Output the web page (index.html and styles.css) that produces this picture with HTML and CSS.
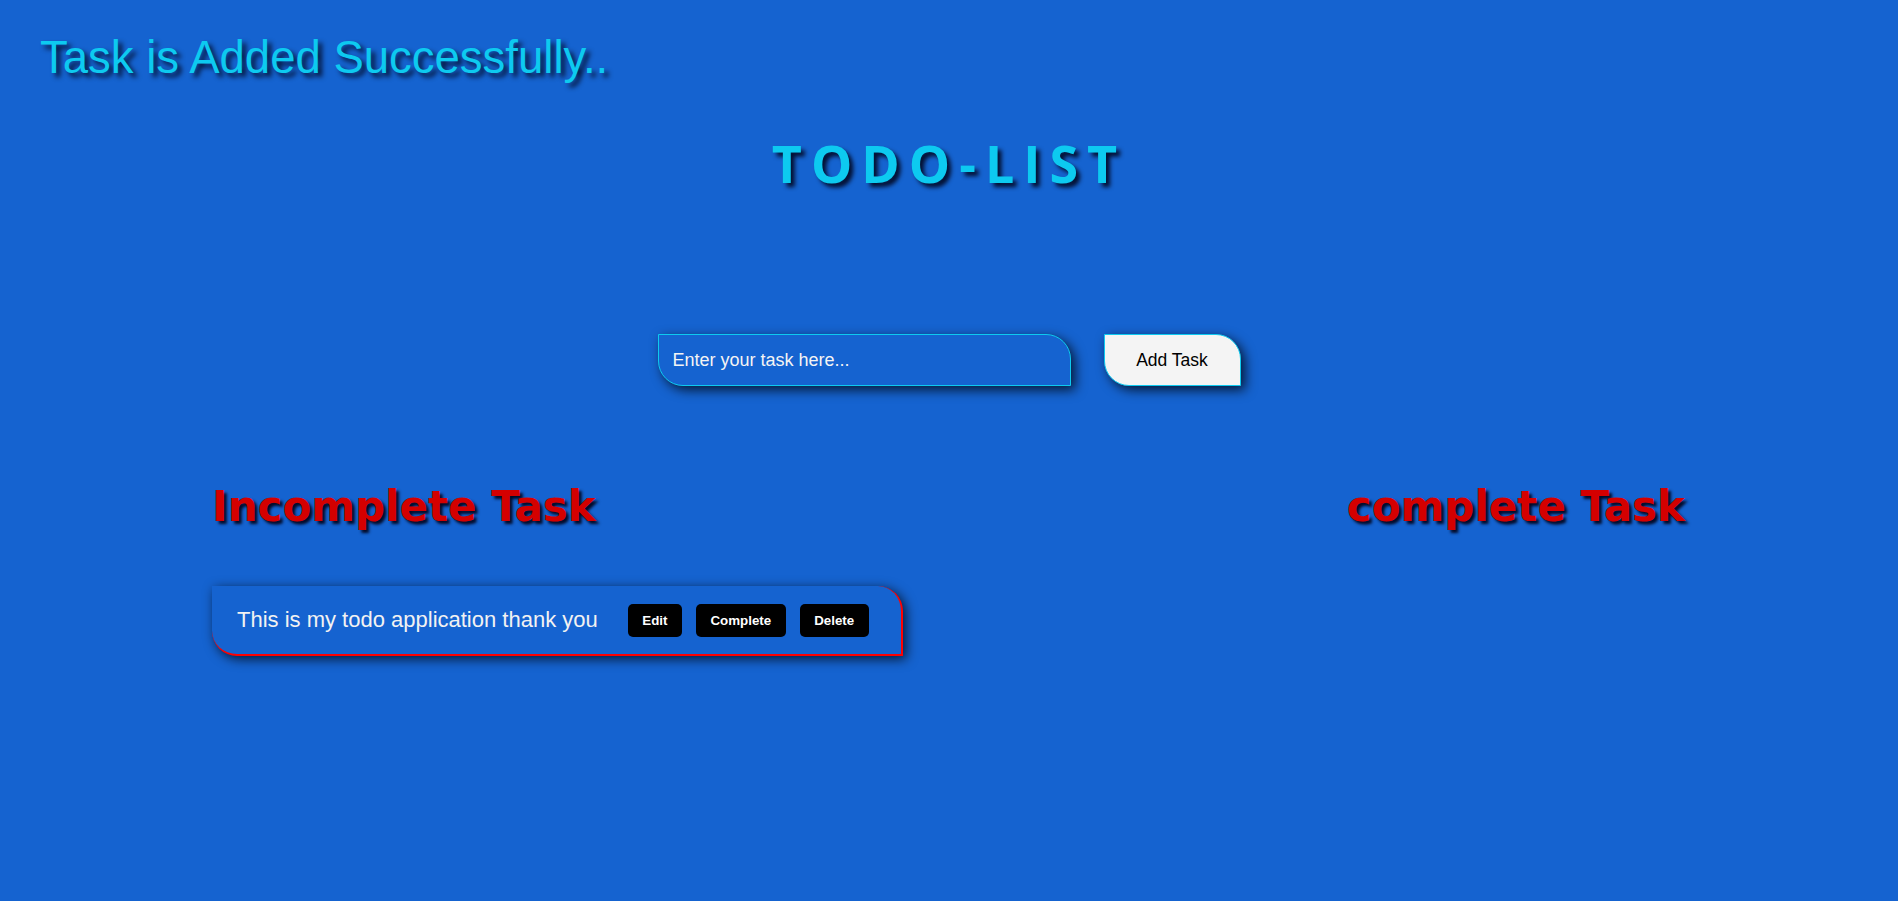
FILE: index.html
```html
<!DOCTYPE html>
<html lang="en">
<head>
<meta charset="utf-8">
<title>TODO-LIST</title>
<link rel="stylesheet" href="styles.css">
</head>
<body>
  <p class="msg">Task is Added Successfully..</p>
  <h1 class="title">TODO-LIST</h1>
  <div class="form">
    <input class="task-input" type="text" placeholder="Enter your task here...">
    <button class="add-btn">Add Task</button>
  </div>
  <div class="lists">
    <section class="col">
      <h2 class="heading">Incomplete Task</h2>
      <div class="item">
        <span class="item-text">This is my todo application thank you</span>
        <div class="actions">
          <button class="act">Edit</button>
          <button class="act">Complete</button>
          <button class="act">Delete</button>
        </div>
      </div>
    </section>
    <section class="col">
      <h2 class="heading">complete Task</h2>
    </section>
  </div>
</body>
</html>
```
FILE: styles.css
```css
html, body {
  margin: 0;
  padding: 0;
}
body {
  background: #1563d0;
  font-family: "Liberation Sans", Arial, sans-serif;
  min-height: 901px;
}
.msg {
  margin: 0;
  padding: 32px 0 0 40px;
  font-size: 45.5px;
  color: #0dcaf0;
  text-shadow: 4px 4px 5px rgba(0, 0, 20, 0.85);
}
.title {
  margin: 43px 0 0;
  text-align: center;
  font-family: "Open Sans", sans-serif;
  font-weight: 700;
  font-size: 52px;
  letter-spacing: 9px;
  color: #0dcaf0;
  text-shadow: 4px 4px 4px rgba(0, 0, 20, 0.85);
}
.form {
  margin-top: 136px;
  display: flex;
  justify-content: center;
  gap: 33px;
}
.task-input {
  box-sizing: border-box;
  width: 413px;
  height: 52px;
  padding: 0 14px;
  border: 1px solid #0dcaf0;
  border-radius: 0 25px 0 25px;
  background: #1563d0;
  color: #fff;
  font-family: "Liberation Sans", Arial, sans-serif;
  font-size: 18px;
  box-shadow: 4px 4px 12px rgba(0, 0, 0, 0.75);
  outline: none;
}
.task-input::placeholder {
  color: #f4f4f4;
  opacity: 1;
}
.add-btn {
  box-sizing: border-box;
  width: 137px;
  height: 52px;
  border: 1px solid #0dcaf0;
  border-radius: 0 25px 0 25px;
  background: #f4f4f4;
  color: #000;
  font-family: "Liberation Sans", Arial, sans-serif;
  font-size: 17.5px;
  box-shadow: 4px 4px 12px rgba(0, 0, 0, 0.75);
}
.lists {
  margin-top: 96px;
  display: flex;
  justify-content: space-between;
  align-items: flex-start;
  padding: 0 213px 0 212px;
}
.heading {
  margin: 0 0 55px;
  font-family: "DejaVu Sans", Verdana, sans-serif;
  font-weight: 700;
  font-size: 42px;
  color: #d40000;
  text-shadow: 3px 3px 3px rgba(0, 0, 20, 0.9);
}
.item {
  display: flex;
  align-items: center;
  height: 68px;
  padding: 0 32px 0 25px;
  background: #1563d0;
  border-right: 2px solid #ff0000;
  border-bottom: 2px solid #ff0000;
  border-radius: 0 25px 0 25px;
  box-shadow: 3px 3px 12px rgba(0, 0, 0, 0.75);
}
.item-text {
  font-size: 22px;
  color: #f2f2f2;
  margin-right: 30px;
}
.actions {
  display: flex;
  gap: 14px;
}
.act {
  height: 33px;
  padding: 0 14.5px;
  border: none;
  border-radius: 5px;
  background: #000;
  color: #fff;
  font-family: "Liberation Sans", Arial, sans-serif;
  font-weight: 700;
  font-size: 13.33px;
}
```
